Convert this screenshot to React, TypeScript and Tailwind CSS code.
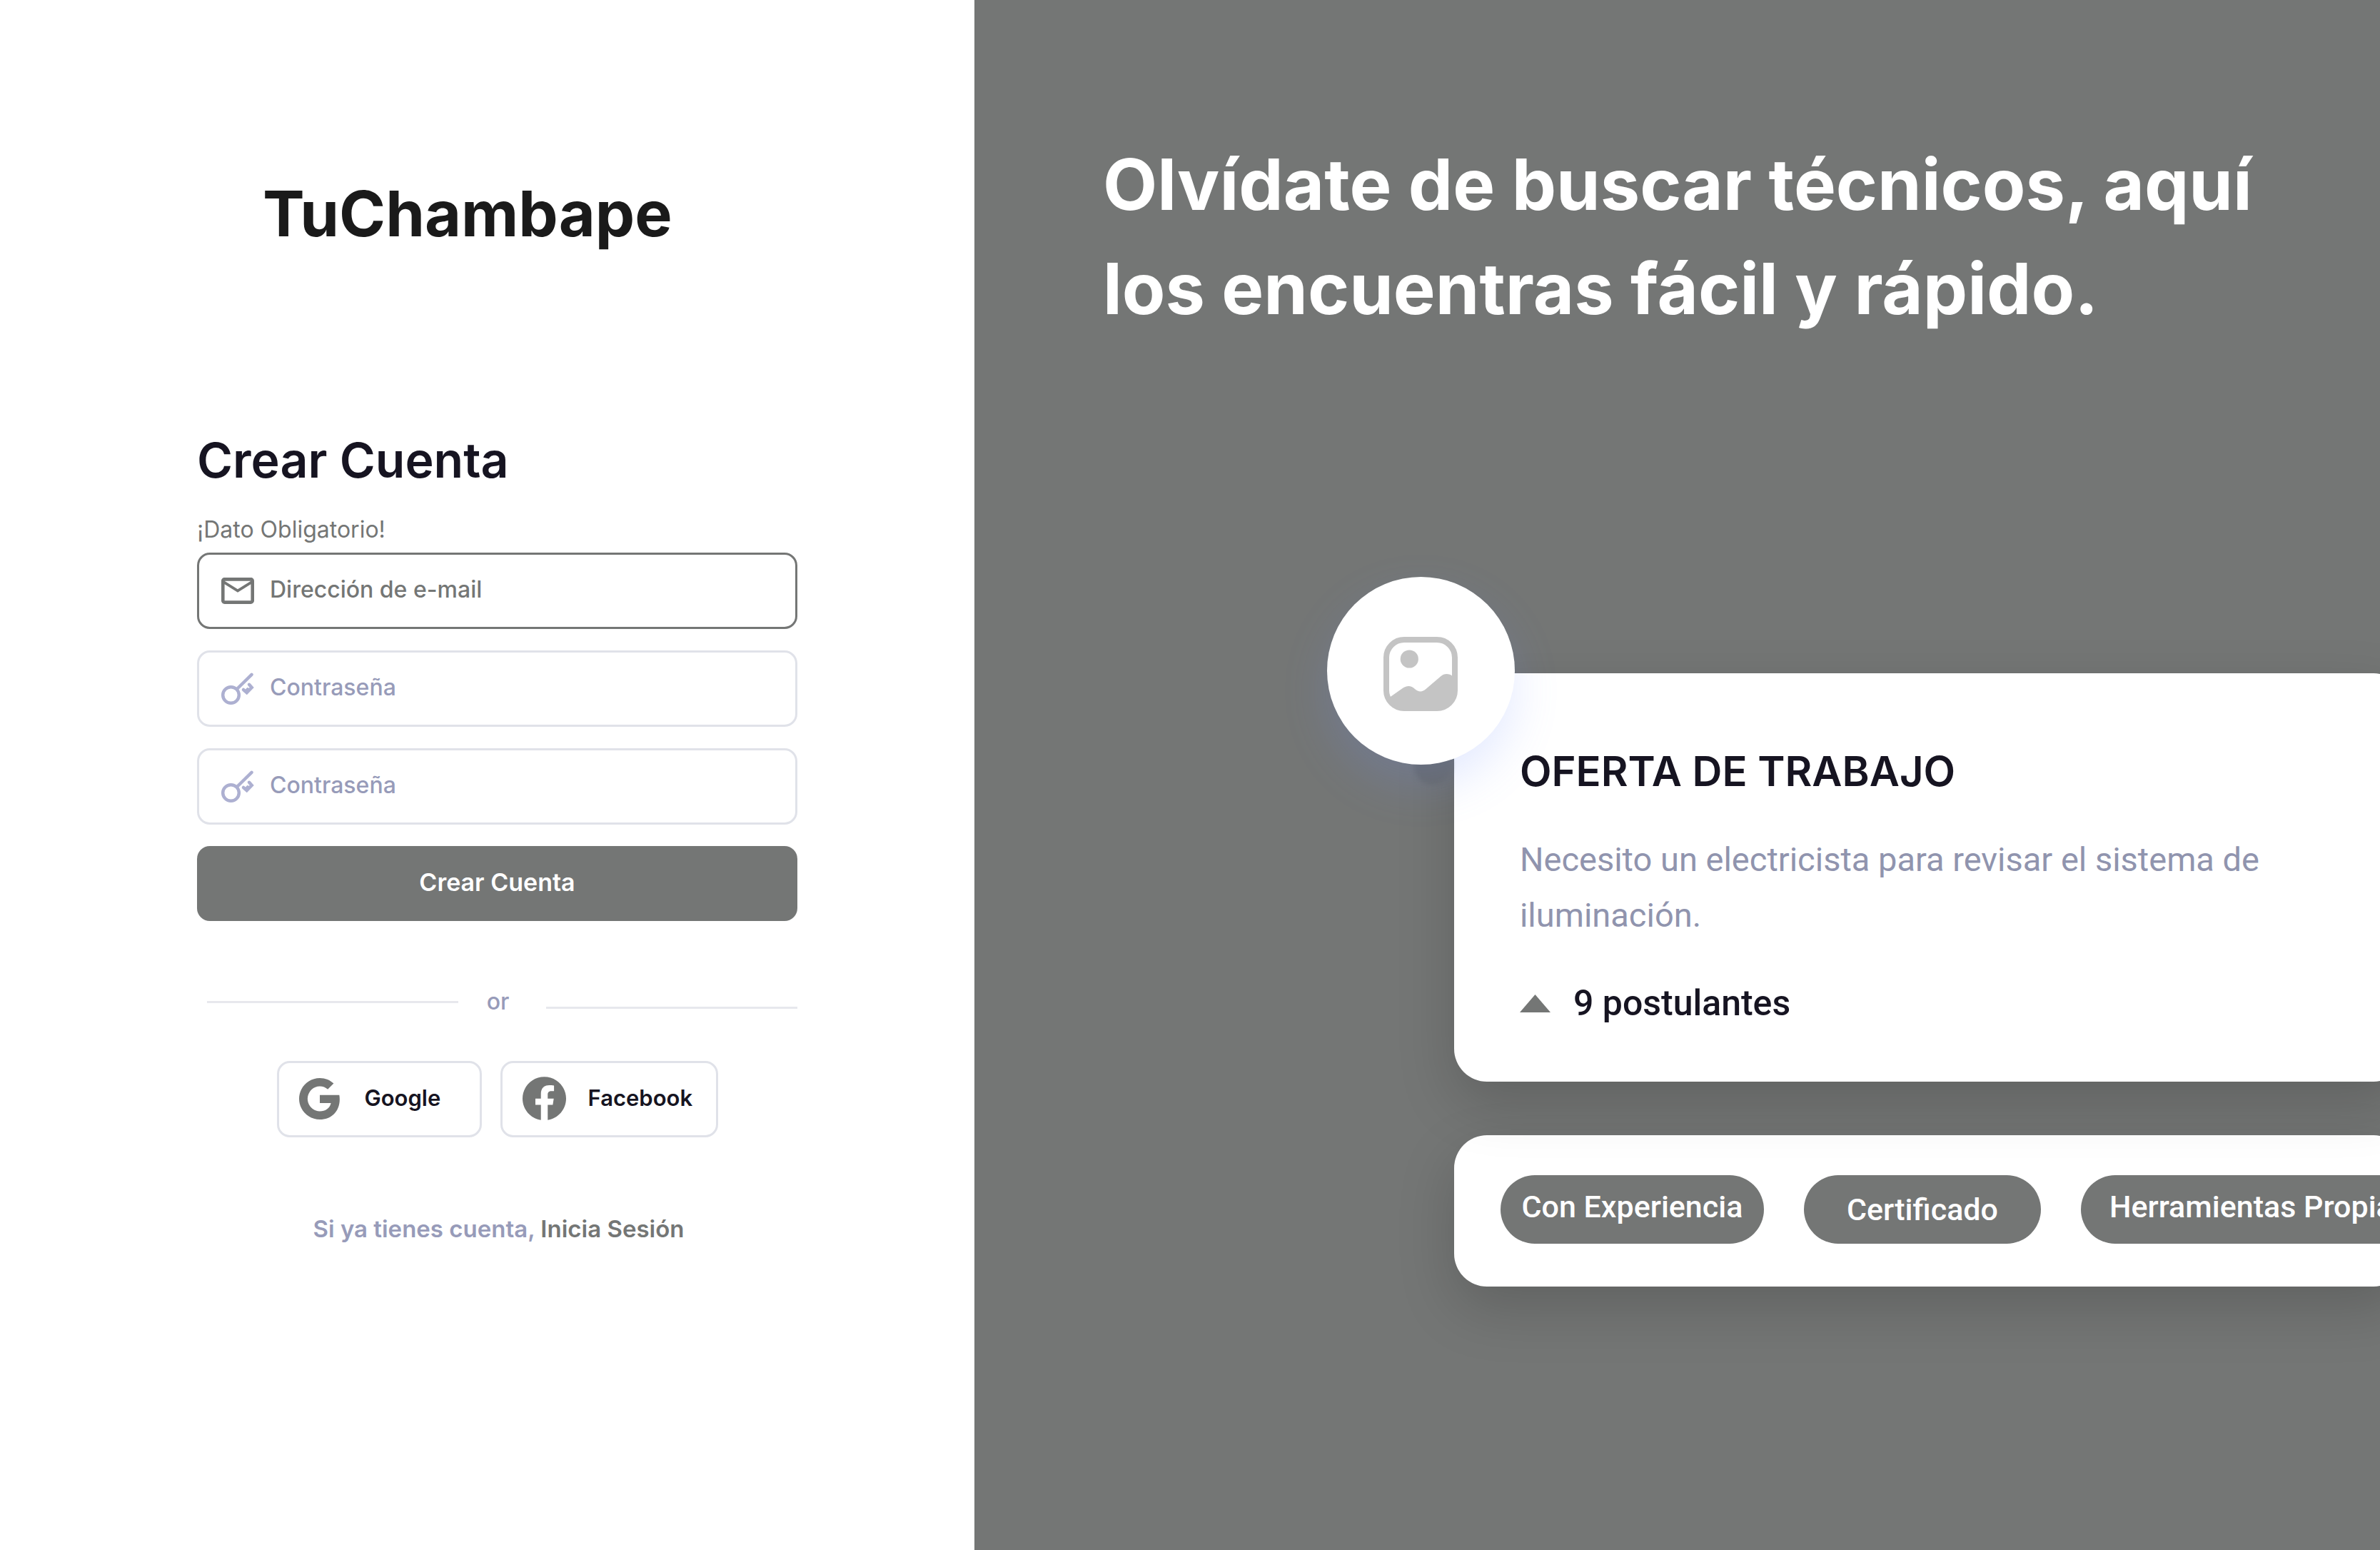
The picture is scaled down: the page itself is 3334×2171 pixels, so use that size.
import type { ReactNode } from "react";

function MailIcon() {
  return (
    <svg viewBox="2 4 20 16" className="w-[46px] h-[37px] shrink-0 fill-[#747675]" aria-hidden="true">
      <path d="M22 6c0-1.1-.9-2-2-2H4c-1.1 0-2 .9-2 2v12c0 1.1.9 2 2 2h16c1.1 0 2-.9 2-2V6zm-2 0l-8 5-8-5h16zm0 12H4V8l8 5 8-5v10z" />
    </svg>
  );
}

function KeyIcon() {
  return (
    <svg viewBox="0 0 46 46" className="w-[46px] h-[46px] shrink-0 fill-none stroke-[#adb0d1]" strokeWidth="4.5" strokeLinecap="round" strokeLinejoin="round" aria-hidden="true">
      <circle cx="13.5" cy="31.5" r="11.3" />
      <path d="M22 23L42.5 2.8" />
      <path d="M31 24l4.7 4.2 7-7.2-3.7-4.2M35.6 25l1.4-1.6" strokeLinejoin="miter" />
    </svg>
  );
}

function GoogleIcon() {
  return (
    <svg viewBox="1 1 22 22" className="w-[58px] h-[58px] shrink-0 fill-[#747675]" aria-hidden="true">
      <path d="M22.56 12.25c0-.78-.07-1.53-.2-2.25H12v4.26h5.92c-.26 1.37-1.04 2.53-2.21 3.31v2.77h3.57c2.08-1.92 3.28-4.74 3.28-8.09z" />
      <path d="M12 23c2.97 0 5.46-.98 7.28-2.66l-3.57-2.77c-.98.66-2.23 1.06-3.71 1.06-2.86 0-5.29-1.93-6.16-4.53H2.18v2.84C3.99 20.53 7.7 23 12 23z" />
      <path d="M5.84 14.09c-.22-.66-.35-1.36-.35-2.09s.13-1.43.35-2.09V7.07H2.18C1.43 8.55 1 10.22 1 12s.43 3.45 1.18 4.93l2.85-2.22.81-.62z" />
      <path d="M12 5.38c1.62 0 3.06.56 4.21 1.64l3.15-3.15C17.45 2.09 14.97 1 12 1 7.7 1 3.99 3.47 2.18 7.07l3.66 2.84c.87-2.6 3.3-4.53 6.16-4.53z" />
    </svg>
  );
}

function FacebookIcon() {
  return (
    <svg viewBox="0 0 24 24" className="w-[61px] h-[61px] shrink-0 fill-[#747675]" aria-hidden="true">
      <path d="M24 12.073c0-6.627-5.373-12-12-12s-12 5.373-12 12c0 5.99 4.388 10.954 10.125 11.854v-8.385H7.078v-3.47h3.047V9.43c0-3.007 1.792-4.669 4.533-4.669 1.312 0 2.686.235 2.686.235v2.953H15.83c-1.491 0-1.956.925-1.956 1.874v2.25h3.328l-.532 3.47h-2.796v8.385C19.612 23.027 24 18.062 24 12.073z" />
    </svg>
  );
}

function PictureIcon() {
  return (
    <svg viewBox="0 0 104 104" className="w-[104px] h-[104px]" aria-hidden="true">
      <rect x="4" y="4" width="96" height="96" rx="25" fill="none" stroke="#c4c4c4" strokeWidth="8" />
      <circle cx="36.3" cy="31" r="12.6" fill="#c4c4c4" />
      <path
        d="M9 84.5L27.500 71.500C33 68 39 68 44 73C49 77.500 54.500 77.500 59.500 73L80 55.500C85 51 91 51 96.500 54.700L102 62V76C102 92 92 102 76 102H30C18 102 11 96 9 84.500Z"
        fill="#c4c4c4"
      />
    </svg>
  );
}

type FieldProps = { id: string; type: string; text: string; icon: ReactNode; active?: boolean };

function Field({ id, type, text, icon, active }: FieldProps) {
  return (
    <div className={`flex h-[107px] items-center gap-[22px] rounded-[18px] border-3 pl-[31px] pr-8 ${active ? "border-[#747675]" : "border-[#e0e2e9]"}`}>
      {icon}
      <input
        id={id}
        type={type}
        placeholder={text}
        aria-label={text}
        className={`h-full min-w-0 flex-1 bg-transparent pb-1 text-[32px] font-medium outline-none ${active ? "placeholder:text-[#747675]" : "placeholder:text-[#979bb9]"}`}
      />
    </div>
  );
}

const tags = ["Con Experiencia", "Certificado", "Herramientas Propias"];

export default function App() {
  return (
    <div className="flex min-h-screen bg-white font-['Inter',sans-serif] text-[#161421]">
      <section className="w-[40.94%] shrink-0 pl-[276px] pt-[249px]">
        <div className="w-full max-w-[841px]">
          <h1 className="pl-[92px] text-[88px] font-bold leading-[100px] text-[#1a1a1a]">TuChambape</h1>
          <form className="mt-[248px] flex flex-col" onSubmit={(e) => e.preventDefault()}>
            <h2 className="text-[68px] font-semibold leading-[94px]">Crear Cuenta</h2>
            <label htmlFor="email" className="mt-7 mb-[9px] text-[32px] leading-[46px] text-[#747675]">
              ¡Dato Obligatorio!
            </label>
            <div className="flex flex-col gap-[30px]">
              <Field id="email" type="email" text="Dirección de e-mail" icon={<MailIcon />} active />
              <Field id="password" type="password" text="Contraseña" icon={<KeyIcon />} />
              <Field id="password-repeat" type="password" text="Contraseña" icon={<KeyIcon />} />
              <button type="submit" className="h-[105px] rounded-[18px] bg-[#747675] pb-1 text-[34px] font-semibold text-white">
                Crear Cuenta
              </button>
            </div>
          </form>
          <div className="mt-[88px] flex items-center pl-[14px]">
            <div className="h-[3px] flex-1 bg-[#e7e8ed]" />
            <span className="w-[123px] pr-3 text-center text-[32px] font-medium leading-[50px] text-[#979bb9]">or</span>
            <div className="mt-4 h-[3px] flex-1 bg-[#e7e8ed]" />
          </div>
          <div className="mt-[58px] flex justify-center gap-[26px]">
            <button type="button" className="flex h-[107px] w-[287px] items-center gap-[34px] rounded-[18px] border-3 border-[#e0e2e9] pb-0.5 pl-7 text-[31px] font-semibold">
              <GoogleIcon />
              Google
            </button>
            <button type="button" className="flex h-[107px] w-[305px] items-center gap-[31px] rounded-[18px] border-3 border-[#e0e2e9] pb-0.5 pl-7 text-[31px] font-semibold">
              <FacebookIcon />
              Facebook
            </button>
          </div>
          <p className="mt-[103px] pl-1 text-center text-[33px] font-semibold leading-[50px] text-[#979bb9]">
            Si ya tienes cuenta,{" "}
            <a href="#iniciar-sesion" className="text-[#747675]">
              Inicia Sesión
            </a>
          </p>
        </div>
      </section>

      <section className="min-w-0 flex-1 overflow-hidden bg-[#747675] pl-[180px] pt-[185px]">
        <h2 className="whitespace-nowrap text-[99px] font-bold leading-[146px] text-white">
          Olvídate de buscar técnicos, aquí
          <br />
          los encuentras fácil y rápido.
        </h2>
        <div className="ml-[492px] mt-[466px] w-[1334px]">
          <article className="relative rounded-[46px] bg-white pb-[70px] pl-[92px] pt-[93px] shadow-[0_30px_80px_rgba(0,0,0,0.17)]">
            <div className="absolute -left-[56px] top-[102px] h-[54px] w-[52px] rounded-full bg-[#676968] blur-[3px]" />
            <div className="absolute -left-[178px] -top-[135px] flex h-[263px] w-[263px] items-center justify-center rounded-full bg-white pt-2 shadow-[0_28px_64px_rgba(113,146,255,0.19)]">
              <PictureIcon />
            </div>
            <h3 className="relative text-[58px] font-semibold leading-[88px]">OFERTA DE TRABAJO</h3>
            <p className="mt-[41px] max-w-[1100px] font-['Roboto',sans-serif] text-[47px] leading-[78px] text-[#9094ae]">
              Necesito un electricista para revisar el sistema de iluminación.
            </p>
            <div className="mt-11 flex items-center gap-8 font-['Roboto',sans-serif] text-[50px] font-medium leading-[80px]">
              <svg viewBox="0 0 43 25" className="h-[25px] w-[43px] fill-[#747675]" aria-hidden="true">
                <path d="M21.5 0L43 25H0z" />
              </svg>
              9 postulantes
            </div>
          </article>
          <ul className="mt-[75px] flex h-[212px] items-center gap-14 rounded-[46px] bg-white pb-1 pl-[65px] font-['Roboto',sans-serif] text-[43px] font-medium text-white shadow-[0_30px_80px_rgba(0,0,0,0.17)]">
            <li className="flex h-24 w-[369px] shrink-0 items-center justify-center rounded-full bg-[#747675] pb-2">{tags[0]}</li>
            <li className="flex h-24 w-[332px] shrink-0 items-center justify-center rounded-full bg-[#747675]">{tags[1]}</li>
            <li className="flex h-24 w-[500px] shrink-0 items-center whitespace-nowrap rounded-full bg-[#747675] pb-2 pl-10">{tags[2]}</li>
          </ul>
        </div>
      </section>
    </div>
  );
}
